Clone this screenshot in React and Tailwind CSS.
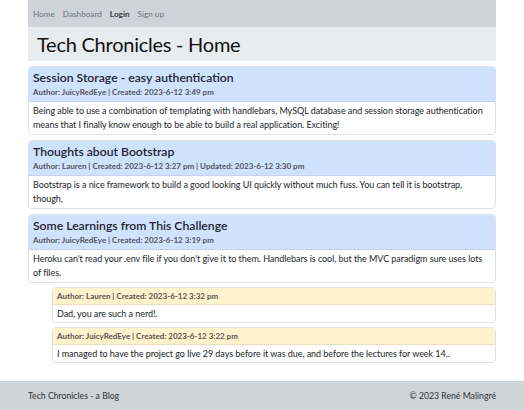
import React from "react";

const POSTS = [
  {
    title: "Session Storage - easy authentication",
    meta: "Author: JuicyRedEye | Created: 2023-6-12 3:49 pm",
    body: "Being able to use a combination of templating with handlebars, MySQL database and session storage authentication means that I finally know enough to be able to build a real application. Exciting!",
  },
  {
    title: "Thoughts about Bootstrap",
    meta: "Author: Lauren | Created: 2023-6-12 3:27 pm | Updated: 2023-6-12 3:30 pm",
    body: "Bootstrap is a nice framework to build a good looking UI quickly without much fuss. You can tell it is bootstrap, though,",
  },
  {
    title: "Some Learnings from This Challenge",
    meta: "Author: JuicyRedEye | Created: 2023-6-12 3:19 pm",
    body: "Heroku can't read your .env file if you don't give it to them. Handlebars is cool, but the MVC paradigm sure uses lots of files.",
  },
];

const COMMENTS = [
  { meta: "Author: Lauren | Created: 2023-6-12 3:32 pm", body: "Dad, you are such a nerd!." },
  { meta: "Author: JuicyRedEye | Created: 2023-6-12 3:22 pm", body: "I managed to have the project go live 29 days before it was due, and before the lectures for week 14.." },
];

export default function App() {
  return (
    <div className="h-[410px] flex flex-col bg-white text-[#212529] font-['Lato',sans-serif]">
      <div className="mx-[28px] flex-1">
        {/* Nav */}
        <nav className="h-[27px] bg-[#ced4da] flex items-center gap-[8px] px-[5px] pt-[1px] text-[8.2px] text-[#6c757d]">
          <a>Home</a>
          <a>Dashboard</a>
          <a className="font-bold text-[#343a40]">Login</a>
          <a>Sign up</a>
        </nav>
        <header className="h-[34px] bg-[#e9ecef] flex items-center px-[9px]">
          <h1 className="text-[20px] tracking-[-0.25px] leading-none text-[#111]">Tech Chronicles - Home</h1>
        </header>

        {/* Posts */}
        <div className="mt-[5px] flex flex-col gap-[5px]">
          {POSTS.map(p => (
            <div key={p.title} className="border border-[#dee2e6] rounded-[4px] overflow-hidden">
              <div className="h-[35px] bg-[#cfe2ff] px-[4px] pt-[2px] border-b border-[#c5d3e8]">
                <h3 className="text-[12.2px] leading-[18px] font-semibold text-[#212529]">{p.title}</h3>
                <p className="text-[8px] leading-[11px] font-bold text-[#555]">{p.meta}</p>
              </div>
              <p className="pl-[4px] pr-[5px] pt-[2px] pb-[2px] text-[9px] tracking-[-0.05px] leading-[14px]">{p.body}</p>
            </div>
          ))}
        </div>

        {/* Comments */}
        <div className="ml-[24px] mt-[4px] flex flex-col gap-[4px]">
          {COMMENTS.map(c => (
            <div key={c.meta} className="border border-[#dee2e6] rounded-[4px] overflow-hidden">
              <div className="h-[17px] bg-[#fff3cd] px-[4px] flex items-center border-b border-[#eadfbc]">
                <p className="text-[8px] leading-[12px] font-bold text-[#555]">{c.meta}</p>
              </div>
              <p className="px-[4px] pt-[2px] pb-[1px] text-[9px] tracking-[-0.05px] leading-[14px]">{c.body}</p>
            </div>
          ))}
        </div>
      </div>

      <footer className="h-[29px] bg-[#ced4da] px-[28px] flex items-center justify-between text-[8.7px] text-[#333]">
        <span>Tech Chronicles - a Blog</span>
        <span>© 2023 René Malingré</span>
      </footer>
    </div>
  );
}
